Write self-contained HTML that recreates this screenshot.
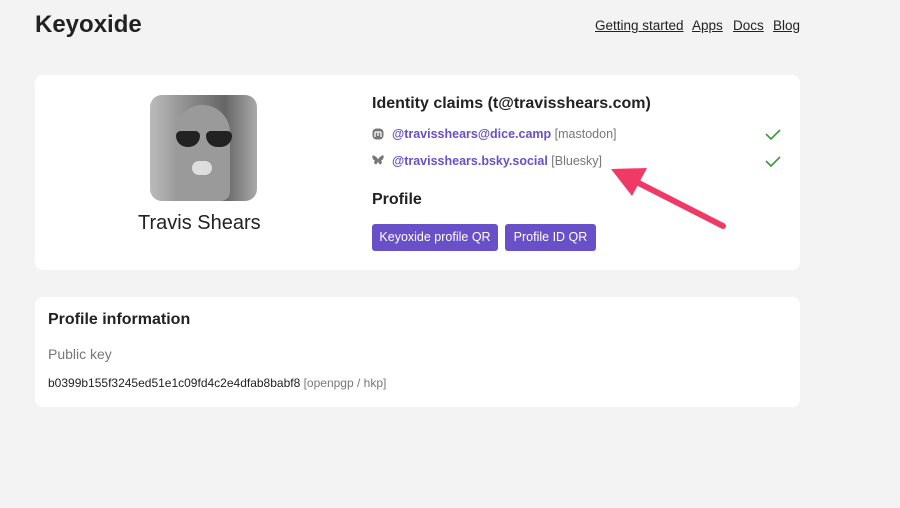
<!DOCTYPE html>
<html><head><style>
body{margin:0;background:#f3f3f3;font-family:"Liberation Sans",Arial,sans-serif;color:#222;width:900px;height:508px;overflow:hidden;position:relative}
.a{position:absolute;white-space:nowrap}
.n{position:absolute;top:18px;font-size:13.5px;text-decoration:underline;white-space:nowrap}
.card{position:absolute;background:#fff;border-radius:8px}
.btn{position:absolute;background:#6750c8;color:#fff;font-size:12.5px;border-radius:3px;height:27px;line-height:27px;text-align:center}
.lnk{color:#6a4fc7;font-weight:bold}
.g{color:#777}
</style></head><body>
<div class="a" style="left:35px;top:11px;font-size:24px;font-weight:bold">Keyoxide</div>
<div class="n" style="left:595px">Getting started</div>
<div class="n" style="left:692px">Apps</div>
<div class="n" style="left:733px">Docs</div>
<div class="n" style="left:773px">Blog</div>
<div class="card" style="left:35px;top:75px;width:765px;height:195px"></div>
<div class="a" style="left:150px;top:95px;width:107px;height:106px;border-radius:12px;overflow:hidden;background:linear-gradient(90deg,#bbb,#888 40%,#666 70%,#aaa)">
<div class="a" style="left:25px;top:10px;width:55px;height:96px;border-radius:30px 30px 10px 10px;background:#9a9a9a"></div>
<div class="a" style="left:26px;top:36px;width:24px;height:16px;border-radius:5px 5px 12px 12px;background:#222"></div>
<div class="a" style="left:56px;top:36px;width:26px;height:16px;border-radius:5px 5px 12px 12px;background:#222"></div>
<div class="a" style="left:42px;top:66px;width:20px;height:14px;border-radius:8px;background:#ddd"></div>
</div>
<div class="a" style="left:138px;top:212px;font-size:20px">Travis Shears</div>
<div class="a" style="left:372px;top:95px;font-size:16px;font-weight:bold">Identity claims (t@travisshears.com)</div>
<svg class="a" style="left:372px;top:128px" width="12" height="12" viewBox="0 0 12 12"><rect x="0.5" y="0.5" width="11" height="11" rx="4" fill="#777"/><path d="M3 9V4.5M3 5c0-1.5 3-1.5 3 0V8M6 5c0-1.5 3-1.5 3 0V9" stroke="#fff" stroke-width="1.3" fill="none"/></svg>
<div class="a" style="left:392px;top:127px;font-size:12.5px"><span class="lnk">@travisshears@dice.camp</span> <span class="g">[mastodon]</span></div>
<svg class="a" style="left:372px;top:155px" width="12" height="11" viewBox="0 0 12 11"><path d="M6 4.5C5 2 2 0 0.5 0.5 0 3 1 5 3 5.5 1.5 6.5 2 9 4 9.5 5 9 6 7 6 6 6 7 7 9 8 9.5 10 9 10.5 6.5 9 5.5 11 5 12 3 11.5 0.5 10 0 7 2 6 4.5z" fill="#777"/></svg>
<div class="a" style="left:392px;top:154px;font-size:12.5px"><span class="lnk">@travisshears.bsky.social</span> <span class="g">[Bluesky]</span></div>
<svg class="a" style="left:764px;top:127px" width="18" height="40"><path d="M2 7l5 5 9-9M2 34l5 5 9-9" stroke="#3a9a3a" stroke-width="1.6" fill="none"/></svg>
<svg class="a" style="left:605px;top:160px" width="125" height="75"><path d="M118 66L22 17" stroke="#f03a66" stroke-width="6" stroke-linecap="round"/><path d="M6 9L42 8 27 36z" fill="#f03a66"/></svg>
<div class="a" style="left:372px;top:191px;font-size:16px;font-weight:bold">Profile</div>
<div class="btn" style="left:372px;top:224px;width:126px">Keyoxide profile QR</div>
<div class="btn" style="left:505px;top:224px;width:91px">Profile ID QR</div>
<div class="card" style="left:35px;top:297px;width:765px;height:110px"></div>
<div class="a" style="left:48px;top:311px;font-size:16px;font-weight:bold">Profile information</div>
<div class="a g" style="left:48px;top:346px;font-size:14px">Public key</div>
<div class="a" style="left:48px;top:376px;font-size:12px">b0399b155f3245ed51e1c09fd4c2e4dfab8babf8 <span class="g">[openpgp / hkp]</span></div>
</body></html>
